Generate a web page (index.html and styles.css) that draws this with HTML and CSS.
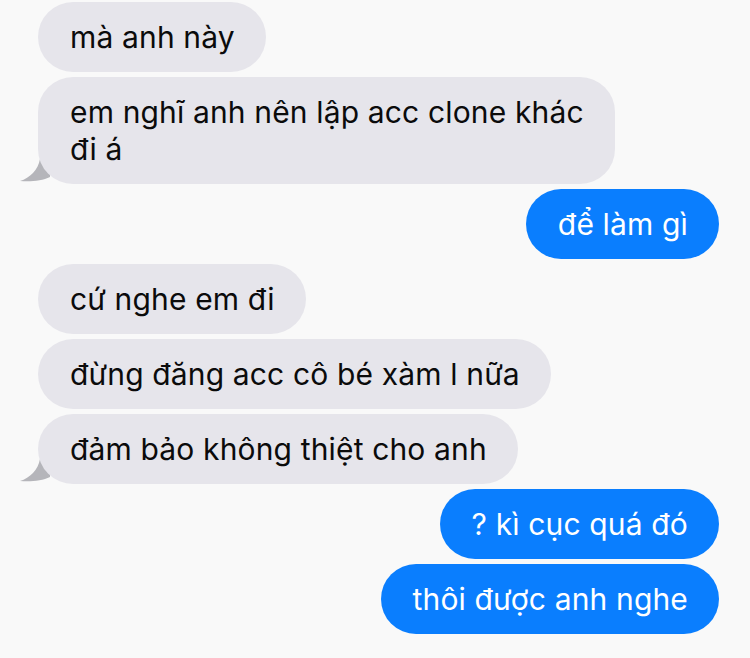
FILE: index.html
```html
<!DOCTYPE html>
<html lang="vi">
<head>
<meta charset="utf-8">
<link rel="stylesheet" href="styles.css">
</head>
<body>
<div class="chat">
  <div class="msg in">mà anh này</div>
  <div class="msg in tail">em nghĩ anh nên lập acc clone khác<br>đi á<svg class="tail-shape" width="30" height="28" viewBox="0 0 30 28"><path d="M0 25 C10 22 18 14 20 3 L30 3 L30 21 C22 25 10 26 0 25 Z"/></svg></div>
  <div class="msg out">để làm gì</div>
  <div class="msg in">cứ nghe em đi</div>
  <div class="msg in">đừng đăng acc cô bé xàm l nữa</div>
  <div class="msg in tail">đảm bảo không thiệt cho anh<svg class="tail-shape" width="30" height="28" viewBox="0 0 30 28"><path d="M0 25 C10 22 18 14 20 3 L30 3 L30 21 C22 25 10 26 0 25 Z"/></svg></div>
  <div class="msg out">? kì cục quá đó</div>
  <div class="msg out">thôi được anh nghe</div>
</div>
</body>
</html>
```
FILE: styles.css
```css
html, body {
  margin: 0;
  padding: 0;
  background: #f9f9f9;
}
body {
  width: 750px;
  height: 658px;
  overflow: hidden;
  font-family: Inter, "Noto Sans", sans-serif;
}
.chat {
  position: relative;
  z-index: 0;
  display: flex;
  flex-direction: column;
  gap: 5px;
  padding: 2px 31px 0 38px;
}
.msg {
  position: relative;
  max-width: 600px;
  box-sizing: border-box;
  padding: 17px 31px 16px 32px;
  border-radius: 35px;
  font-size: 30px;
  line-height: 37px;
  letter-spacing: 0.15px;
}
.in {
  align-self: flex-start;
  background: #e6e5eb;
  color: #0b0b0b;
}
.out {
  align-self: flex-end;
  background: #0a7efe;
  color: #ffffff;
}
.tail-shape {
  position: absolute;
  left: -18px;
  bottom: 0;
  z-index: -1;
  fill: #b5b5ba;
}
```
